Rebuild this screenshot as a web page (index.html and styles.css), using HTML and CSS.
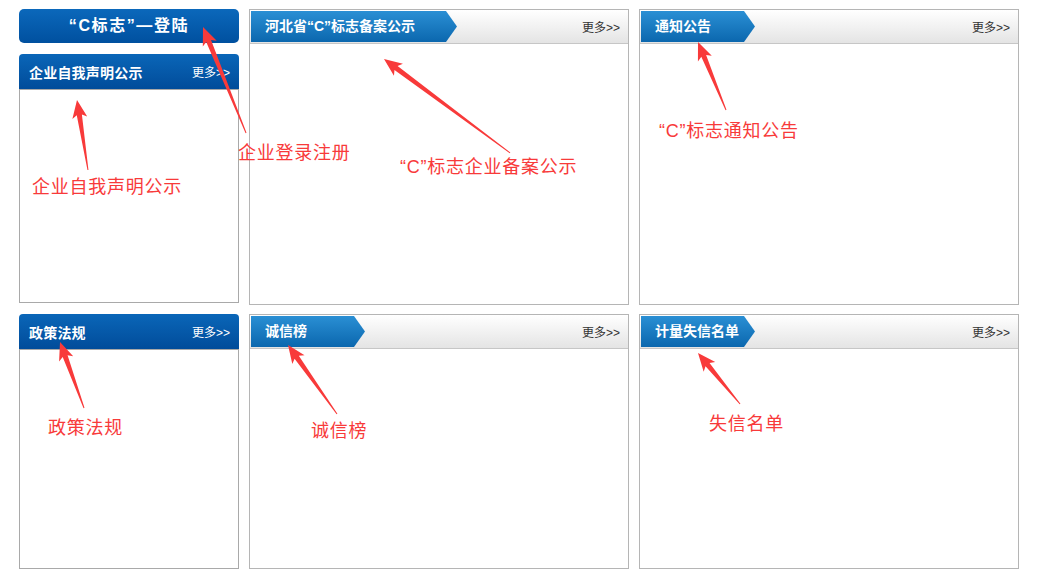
FILE: index.html
```html
<!DOCTYPE html>
<html lang="zh-CN">
<head>
<meta charset="utf-8">
<title>C标志</title>
<link rel="stylesheet" href="styles.css">
</head>
<body>
<div class="page">
  <div class="grid">
    <div class="left-col">
      <a class="login" href="#">“C标志”—登陆</a>
      <div class="box-blue">
        <div class="blue-head"><span class="blue-title">企业自我声明公示</span><span class="more more-white">更多&gt;&gt;</span></div>
        <div class="blue-body"></div>
      </div>
    </div>
    <div class="box-tab">
      <div class="tab-head"><span class="tab tab-wide">河北省“C”标志备案公示</span><span class="more">更多&gt;&gt;</span></div>
      <div class="tab-body"></div>
    </div>
    <div class="box-tab">
      <div class="tab-head"><span class="tab">通知公告</span><span class="more">更多&gt;&gt;</span></div>
      <div class="tab-body"></div>
    </div>
    <div class="box-blue">
      <div class="blue-head"><span class="blue-title">政策法规</span><span class="more more-white">更多&gt;&gt;</span></div>
      <div class="blue-body"></div>
    </div>
    <div class="box-tab">
      <div class="tab-head"><span class="tab">诚信榜</span><span class="more">更多&gt;&gt;</span></div>
      <div class="tab-body"></div>
    </div>
    <div class="box-tab">
      <div class="tab-head"><span class="tab">计量失信名单</span><span class="more">更多&gt;&gt;</span></div>
      <div class="tab-body"></div>
    </div>
  </div>

  <svg class="arrows" width="1044" height="579" viewBox="0 0 1044 579">
    <g fill="#f83a3a">
      <path transform="translate(203 27) rotate(67.9)" d="M0,0 L18,-7.5 L15,-2.6 L114.4,-0.5 L114.4,0.5 L15,2.6 L18,7.5 Z"/>
      <path transform="translate(77 100) rotate(81.1)" d="M0,0 L18,-7.5 L15,-2.6 L70.9,-0.5 L70.9,0.5 L15,2.6 L18,7.5 Z"/>
      <path transform="translate(384 59) rotate(36.7)" d="M0,0 L18,-7.5 L15,-2.6 L157.2,-0.5 L157.2,0.5 L15,2.6 L18,7.5 Z"/>
      <path transform="translate(698 42) rotate(67.6)" d="M0,0 L18,-7.5 L15,-2.6 L73.5,-0.5 L73.5,0.5 L15,2.6 L18,7.5 Z"/>
      <path transform="translate(60 342) rotate(70)" d="M0,0 L18,-7.5 L15,-2.6 L70.2,-0.5 L70.2,0.5 L15,2.6 L18,7.5 Z"/>
      <path transform="translate(288 345) rotate(54.6)" d="M0,0 L18,-7.5 L15,-2.6 L84.6,-0.5 L84.6,0.5 L15,2.6 L18,7.5 Z"/>
      <path transform="translate(698 353) rotate(50.5)" d="M0,0 L18,-7.5 L15,-2.6 L66.1,-0.5 L66.1,0.5 L15,2.6 L18,7.5 Z"/>
    </g>
  </svg>

  <span class="note note-login">企业登录注册</span>
  <span class="note note-self">企业自我声明公示</span>
  <span class="note note-record">“C”标志企业备案公示</span>
  <span class="note note-notice">“C”标志通知公告</span>
  <span class="note note-policy">政策法规</span>
  <span class="note note-credit">诚信榜</span>
  <span class="note note-black">失信名单</span>
</div>
</body>
</html>
```

FILE: styles.css
```css
* { box-sizing: border-box; }
html, body { margin: 0; padding: 0; background: #fff; }
body { font-family: "Liberation Sans", "Noto Sans CJK SC", sans-serif; }

.page {
  position: relative;
  width: 1044px;
  height: 579px;
  padding: 9px 0 0 19px;
}

.grid {
  display: grid;
  grid-template-columns: 220px 380px 380px;
  grid-template-rows: 296px 255px;
  column-gap: 10px;
  row-gap: 9px;
}

.left-col {
  display: flex;
  flex-direction: column;
  gap: 11px;
  padding-bottom: 2px;
}

.login {
  display: block;
  height: 34px;
  line-height: 34px;
  border-radius: 5px;
  background: linear-gradient(#0b68bb, #00509f);
  color: #fff;
  text-align: center;
  text-decoration: none;
  font-size: 16px;
  font-weight: bold;
  letter-spacing: 1.6px;
}

.box-blue {
  display: flex;
  flex-direction: column;
  flex: 1;
  min-height: 0;
}

.blue-head {
  height: 35px;
  flex: none;
  display: flex;
  align-items: center;
  justify-content: space-between;
  padding: 0 9px 0 10px;
  border-radius: 4px 4px 0 0;
  background: linear-gradient(#0a66b8, #014c9a);
}

.blue-title {
  color: #fff;
  font-size: 14px;
  font-weight: bold;
  letter-spacing: 0.2px;
}

.blue-body {
  flex: 1;
  border: 1px solid #a9a9a9;
}

.box-tab {
  display: flex;
  flex-direction: column;
  border: 1px solid #b5b5b5;
}

.tab-head {
  height: 34px;
  flex: none;
  display: flex;
  align-items: center;
  justify-content: space-between;
  padding: 1px 8px 1px 1px;
  background: linear-gradient(#ffffff, #e4e4e4);
  border-bottom: 1px solid #c6c6c6;
}

.tab {
  width: 114px;
  height: 31px;
  line-height: 31px;
  padding-left: 14px;
  color: #fff;
  font-size: 14px;
  font-weight: bold;
  background: linear-gradient(#2a8fd4, #0b67ae);
  clip-path: polygon(0 0, calc(100% - 11px) 0, 100% 50%, calc(100% - 11px) 100%, 0 100%);
}

.tab-wide { width: 206px; }

.tab-body { flex: 1; }

.more {
  font-size: 12px;
  color: #333;
}

.more-white { color: #fff; }

.arrows {
  position: absolute;
  left: 0;
  top: 0;
  pointer-events: none;
}

.note {
  position: absolute;
  font-size: 18px;
  line-height: 20px;
  letter-spacing: 0.75px;
  color: #f83a3a;
  white-space: nowrap;
}

.note-login  { left: 238px; top: 143px; }
.note-self   { left: 32px;  top: 177px; }
.note-record { left: 400px; top: 157px; }
.note-notice { left: 659px; top: 121px; }
.note-policy { left: 48px;  top: 418px; }
.note-credit { left: 311px; top: 421px; }
.note-black  { left: 709px; top: 414px; }
```
